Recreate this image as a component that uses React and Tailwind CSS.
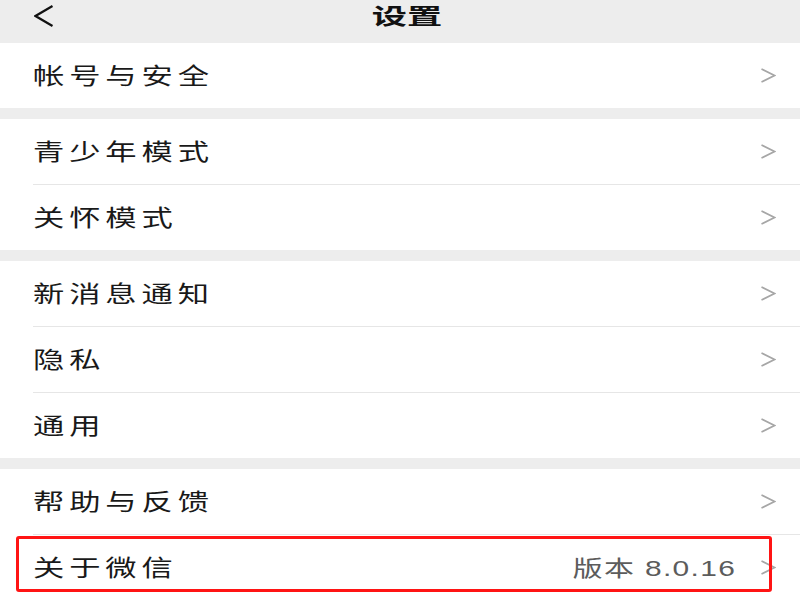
import React from 'react';

const font = { fontFamily: '"Liberation Sans", "Noto Sans CJK SC", sans-serif' };

const groups = [
  [{ label: '帐号与安全' }],
  [{ label: '青少年模式' }, { label: '关怀模式' }],
  [{ label: '新消息通知' }, { label: '隐私' }, { label: '通用' }],
  [{ label: '帮助与反馈' }, { label: '关于微信', value: '版本 8.0.16', marked: true }],
];

const Chevron = () => (
  <svg width="16" height="15" viewBox="0 0 16 15" fill="none" className="shrink-0">
    <polyline points="1.5,1 14.5,7.5 1.5,14" stroke="#a6a6a6" strokeWidth="1.6" strokeLinejoin="miter" />
  </svg>
);

const Row = ({ item, last }) => (
  <div className={`relative bg-white ${last ? 'h-[65px]' : 'h-[66px]'}`}>
    <div
      className={`ml-[33px] h-full flex items-center justify-between pr-[24px] ${
        last ? '' : 'border-b border-[#e6e6e6]'
      }`}
    >
      <span className="inline-block origin-left scale-x-[1.36] text-[23px] tracking-[3.6px] text-[#191919] leading-none pt-[2px]">
        {item.label}
      </span>
      <div className="flex items-center gap-[24px]">
        {item.value && (
          <span className="inline-block origin-right scale-x-[1.36] text-[22px] tracking-[1px] text-[#5c5c5c] leading-none pt-[2px]">
            {item.value}
          </span>
        )}
        <Chevron />
      </div>
    </div>
    {item.marked && (
      <div className="absolute left-[16px] top-[1px] w-[756px] h-[56px] border-[3px] border-[#ff1414] rounded-[3px]" />
    )}
  </div>
);

const App = () => {
  return (
    <div className="w-[800px] h-[600px] overflow-hidden bg-[#ededed]" style={font}>
      <div className="h-[43px] relative flex justify-center pt-[5px]">
        <svg width="20" height="22" viewBox="0 0 20 22" fill="none" className="absolute left-[34px] top-[5px]">
          <polyline points="18.5,1 1.5,11 18.5,21" stroke="#111" strokeWidth="2.2" />
        </svg>
        <span className="inline-block ml-[14px] origin-center scale-x-[1.6] text-[22px] font-bold text-[#111] leading-[24px]">
          设置
        </span>
      </div>
      <div className="flex flex-col gap-[11px]">
        {groups.map((g, gi) => (
          <div key={gi} className="flex flex-col">
            {g.map((item, i) => (
              <Row key={i} item={item} last={i === g.length - 1} />
            ))}
          </div>
        ))}
      </div>
    </div>
  );
};

export default App;
